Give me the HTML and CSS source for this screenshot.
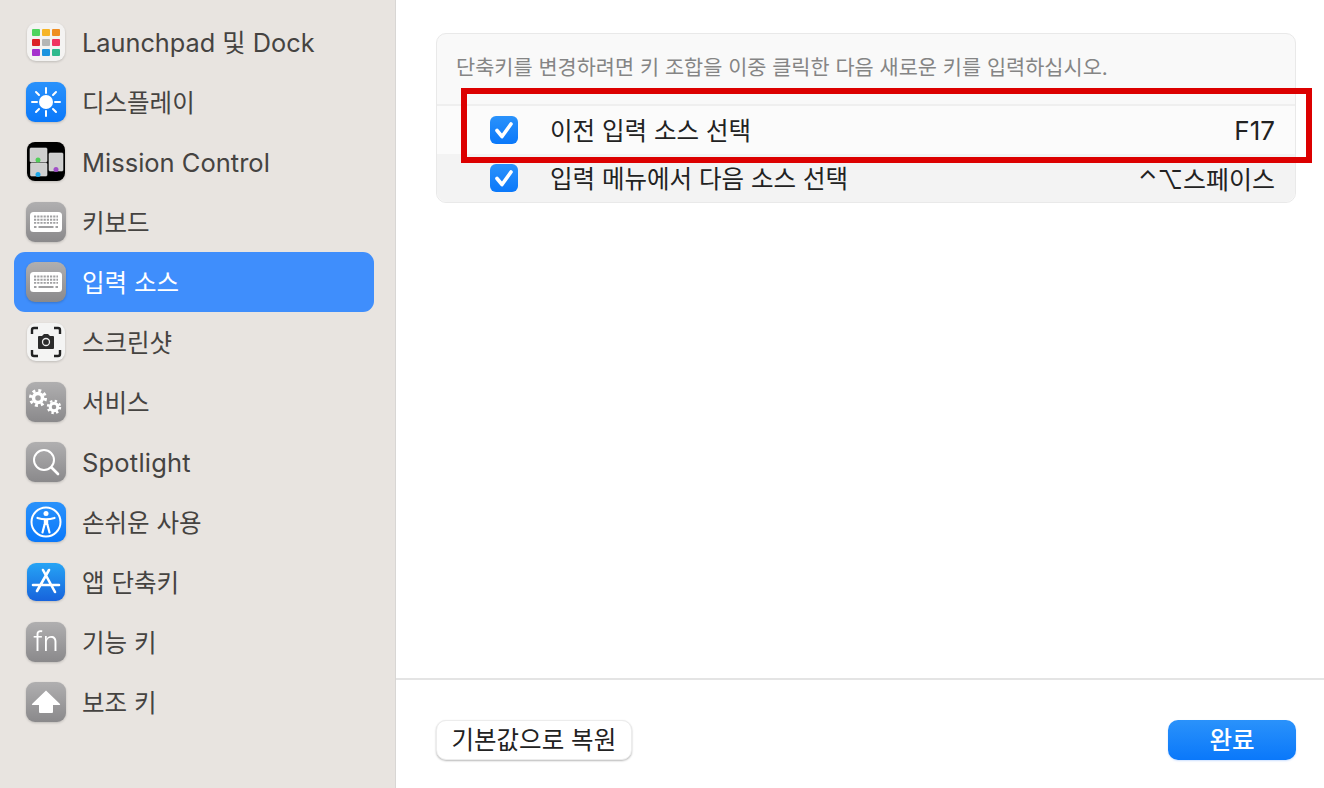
FILE: index.html
```html
<!DOCTYPE html>
<html lang="ko">
<head>
    <meta charset="UTF-8">
    <meta name="viewport" content="width=device-width, initial-scale=1.0">
    <title>키보드 단축키</title>
    <link rel="stylesheet" href="styles.css">
</head>
<body>
    <svg class="sprite" width="0" height="0">
        <defs>
            <linearGradient id="grey" x1="0" y1="0" x2="0" y2="1">
                <stop offset="0" stop-color="#b0afb0"/>
                <stop offset="1" stop-color="#8a898b"/>
            </linearGradient>
            <linearGradient id="blue" x1="0" y1="0" x2="0" y2="1">
                <stop offset="0" stop-color="#2a92fb"/>
                <stop offset="1" stop-color="#0a78fa"/>
            </linearGradient>
            <linearGradient id="store" x1="0" y1="0" x2="0" y2="1">
                <stop offset="0" stop-color="#26a4f5"/>
                <stop offset="1" stop-color="#1763dc"/>
            </linearGradient>
            <symbol id="keyboard" viewBox="0 0 40 40">
                <rect width="40" height="40" rx="9" fill="url(#grey)"/>
                <rect x="4" y="10" width="32" height="20" rx="3.5" fill="#fff"/>
                <path d="M8 14.500h24M8 17.700h24M8 20.900h24" stroke="#a0a0a2" stroke-width="1.900" stroke-dasharray="2.200 1"/>
                <path d="M8 25h2.500M12.500 25h15M29.500 25H32" stroke="#a0a0a2" stroke-width="1.900"/>
            </symbol>
            <symbol id="check" viewBox="0 0 28 28">
                <rect width="28" height="28" rx="6" fill="url(#blue)"/>
                <path d="M7 14.500l5 6L21 8" fill="none" stroke="#fff" stroke-width="3.600" stroke-linecap="round" stroke-linejoin="round"/>
            </symbol>
        </defs>
    </svg>

    <div class="app">
        <nav class="sidebar">
            <div class="nav-item">
                <svg class="icon" viewBox="0 0 40 40">
                    <rect x="1" y="1" width="38" height="38" rx="9" fill="#f4f3f2"/>
                    <rect x="6" y="7" width="8" height="7" rx="1" fill="#4fd45e"/>
                    <rect x="16" y="7" width="8" height="7" rx="1" fill="#f6b427"/>
                    <rect x="26" y="7" width="8" height="7" rx="1" fill="#ee8d22"/>
                    <rect x="6" y="17" width="8" height="7" rx="1" fill="#dc2226"/>
                    <rect x="16" y="17" width="8" height="7" rx="1" fill="#b4b6b6"/>
                    <rect x="26" y="17" width="8" height="7" rx="1" fill="#ef3460"/>
                    <rect x="6" y="27" width="8" height="7" rx="1" fill="#a531cd"/>
                    <rect x="16" y="27" width="8" height="7" rx="1" fill="#1d94df"/>
                    <rect x="26" y="27" width="8" height="7" rx="1" fill="#2fb98d"/>
                </svg>
                <span class="mixed">Launchpad 및 Dock</span>
            </div>
            <div class="nav-item">
                <svg class="icon" viewBox="0 0 40 40">
                    <rect width="40" height="40" rx="9" fill="url(#blue)"/>
                    <circle cx="20" cy="20" r="7" fill="#fff"/>
                    <path d="M20 6v5M20 29v5M6 20h5M29 20h5M10 10l3 3M27 27l3 3M10 30l3-3M27 13l3-3" stroke="#fff" stroke-width="2" stroke-linecap="round"/>
                </svg>
                <span class="ko">디스플레이</span>
            </div>
            <div class="nav-item">
                <svg class="icon" viewBox="0 0 40 40">
                    <rect x="1" width="38" height="39" rx="8" fill="#000"/>
                    <rect x="4" y="6" width="17" height="14" rx="1" fill="#cfcfcf" stroke="#dedede" stroke-width=".6"/>
                    <rect x="4.500" y="21" width="16.500" height="13" rx="1" fill="#cfcfcf" stroke="#dedede" stroke-width=".6"/>
                    <rect x="23" y="11" width="14" height="18" rx="1" fill="#cfcfcf" stroke="#dedede" stroke-width=".6"/>
                    <circle cx="12" cy="18" r="2.500" fill="#52cf5a"/>
                    <circle cx="12" cy="32.500" r="2.500" fill="#1ea7e8"/>
                    <circle cx="30" cy="27.500" r="2.500" fill="#a04fc8"/>
                </svg>
                <span>Mission Control</span>
            </div>
            <div class="nav-item">
                <svg class="icon"><use href="#keyboard"/></svg>
                <span class="ko">키보드</span>
            </div>
            <div class="nav-item selected">
                <svg class="icon"><use href="#keyboard"/></svg>
                <span class="ko">입력 소스</span>
            </div>
            <div class="nav-item">
                <svg class="icon" viewBox="0 0 40 40">
                    <rect x="1" y="1" width="38" height="38" rx="9" fill="#f4f4f3"/>
                    <path d="M6 12V8a2 2 0 0 1 2-2h4M28 6h4a2 2 0 0 1 2 2v4M34 28v4a2 2 0 0 1-2 2h-4M12 34H8a2 2 0 0 1-2-2v-4" fill="none" stroke="#222" stroke-width="2.400"/>
                    <path d="M13 14h3l2-2h4l2 2h3a1 1 0 0 1 1 1v11a1 1 0 0 1-1 1H13a1 1 0 0 1-1-1V15a1 1 0 0 1 1-1z" fill="#2b2b2b"/>
                    <circle cx="20" cy="20" r="3.500" fill="#2b2b2b" stroke="#eee" stroke-width="1.300"/>
                </svg>
                <span class="ko">스크린샷</span>
            </div>
            <div class="nav-item">
                <svg class="icon" viewBox="0 0 40 40">
                    <rect width="40" height="40" rx="9" fill="url(#grey)"/>
                    <circle cx="12" cy="16" r="4.500" fill="none" stroke="#fff" stroke-width="3.500"/>
                    <circle cx="12" cy="16" r="7.500" fill="none" stroke="#fff" stroke-width="3" stroke-dasharray="2.950 2.950"/>
                    <circle cx="28" cy="25" r="3.800" fill="none" stroke="#fff" stroke-width="3"/>
                    <circle cx="28" cy="25" r="6" fill="none" stroke="#fff" stroke-width="2.400" stroke-dasharray="2.360 2.350"/>
                </svg>
                <span class="ko">서비스</span>
            </div>
            <div class="nav-item">
                <svg class="icon" viewBox="0 0 40 40">
                    <rect width="40" height="40" rx="9" fill="url(#grey)"/>
                    <circle cx="18" cy="18" r="10" fill="none" stroke="#fff" stroke-width="2"/>
                    <path d="M25.500 25.500L32 32" stroke="#fff" stroke-width="2.600" stroke-linecap="round"/>
                </svg>
                <span class="spot">Spotlight</span>
            </div>
            <div class="nav-item">
                <svg class="icon" viewBox="0 0 40 40">
                    <rect width="40" height="40" rx="9" fill="url(#blue)"/>
                    <circle cx="20" cy="20" r="14.500" fill="none" stroke="#fff" stroke-width="2"/>
                    <circle cx="20" cy="11.500" r="2.500" fill="#fff"/>
                    <path d="M11.500 16Q20 18.500 28.500 16" fill="none" stroke="#fff" stroke-width="2.200" stroke-linecap="round"/>
                    <path d="M20 17v6" stroke="#fff" stroke-width="4.400"/>
                    <path d="M18.600 22.500L16.500 30.500M21.400 22.500L23.500 30.500" stroke="#fff" stroke-width="2.200" stroke-linecap="round"/>
                </svg>
                <span class="ko">손쉬운 사용</span>
            </div>
            <div class="nav-item">
                <svg class="icon" viewBox="0 0 40 40">
                    <rect x="1" y="1" width="38" height="38" rx="9" fill="url(#store)"/>
                    <path d="M17 8l12 22M23 8L11 29M7 23h26" fill="none" stroke="#fff" stroke-width="2.600" stroke-linecap="round"/>
                </svg>
                <span class="ko">앱 단축키</span>
            </div>
            <div class="nav-item">
                <svg class="icon" viewBox="0 0 40 40">
                    <rect width="40" height="40" rx="9" fill="url(#grey)"/>
                    <text class="fn-text" x="20" y="29" text-anchor="middle">fn</text>
                </svg>
                <span class="ko">기능 키</span>
            </div>
            <div class="nav-item">
                <svg class="icon" viewBox="0 0 40 40">
                    <rect width="40" height="40" rx="9" fill="url(#grey)"/>
                    <path d="M20 8.500L34 22a.6.6 0 0 1-.4 1H27v7a1 1 0 0 1-1 1H14a1 1 0 0 1-1-1v-7H6.400a.6.6 0 0 1-.4-1z" fill="#fff"/>
                </svg>
                <span class="ko">보조 키</span>
            </div>
        </nav>

        <main class="main">
            <div class="content">
                <section class="card">
                    <p class="hint">단축키를 변경하려면 키 조합을 이중 클릭한 다음 새로운 키를 입력하십시오.</p>
                    <div class="row first">
                        <svg class="check"><use href="#check"/></svg>
                        <span class="row-label">이전 입력 소스 선택</span>
                        <span class="row-key latin">F17</span>
                    </div>
                    <div class="row second">
                        <svg class="check"><use href="#check"/></svg>
                        <span class="row-label">입력 메뉴에서 다음 소스 선택</span>
                        <span class="row-key">⌃⌥스페이스</span>
                    </div>
                    <div class="highlight"></div>
                </section>
            </div>
            <footer class="footer">
                <button class="btn">기본값으로 복원</button>
                <button class="btn primary">완료</button>
            </footer>
        </main>
    </div>
</body>
</html>
```

FILE: styles.css
```css
* {
    box-sizing: border-box;
}
html, body {
    margin: 0;
    height: 100%;
    overflow: hidden;
}
body {
    font-family: Inter, "Noto Sans CJK KR", sans-serif;
    background-color: #fff;
}
.sprite {
    position: absolute;
}
.app {
    display: flex;
    height: 788px;
}
.sidebar {
    width: 396px;
    flex-shrink: 0;
    padding: 12px 21px 0 14px;
    background-color: #e8e4e0;
    border-right: 1px solid #d8d6d4;
}
.nav-item {
    display: flex;
    align-items: center;
    gap: 16px;
    height: 60px;
    padding-left: 12px;
    border-radius: 11px;
    font-size: 25.500px;
    color: #454341;
}
.nav-item .ko {
    font-size: 24.500px;
    margin-bottom: 1px;
}
.nav-item .mixed {
    font-size: 25.300px;
    margin-bottom: 2px;
}
.nav-item .spot {
    letter-spacing: 0.2px;
}
.nav-item.selected {
    background-color: #3f8efc;
    color: #fff;
}
.icon {
    width: 40px;
    height: 40px;
    flex-shrink: 0;
    filter: drop-shadow(0 1px 1px rgba(0, 0, 0, 0.18));
}
.fn-text {
    font-family: Inter, sans-serif;
    font-size: 27px;
    font-weight: 300;
    fill: #fff;
}
.main {
    flex: 1;
    display: flex;
    flex-direction: column;
}
.content {
    flex: 1;
    padding: 33px 28px 0 40px;
}
.card {
    position: relative;
    height: 170px;
    background-color: #f9f9f9;
    border: 1px solid #e9e9e9;
    border-radius: 10px;
}
.hint {
    margin: 0;
    height: 72px;
    padding: 20px 19px 0;
    font-size: 20.800px;
    line-height: 28px;
    color: #858585;
    border-bottom: 2px solid #efefef;
}
.row {
    display: flex;
    align-items: center;
    height: 48px;
    padding: 0 20px 0 53px;
    font-size: 24.500px;
    color: #222;
}
.row.first {
    background-color: #fbfbfb;
}
.row.second {
    background-color: #f3f3f3;
    border-radius: 0 0 10px 10px;
}
.check {
    width: 28px;
    height: 28px;
    flex-shrink: 0;
    margin-right: 32px;
}
.row-label {
    flex: 1;
    margin-bottom: 2px;
}
.row-key {
    font-size: 25px;
}
.row-key.latin {
    font-size: 26px;
}
.highlight {
    position: absolute;
    left: 24px;
    top: 54px;
    width: 851px;
    height: 75px;
    border: 6px solid #dc0000;
}
.footer {
    display: flex;
    justify-content: space-between;
    height: 110px;
    padding: 40px 28px 0 40px;
    border-top: 2px solid #e4e4e4;
}
.btn {
    height: 40px;
    padding: 0 14.500px 3px;
    border: 1px solid #ececec;
    border-radius: 10px;
    background-color: #fff;
    box-shadow: 0 1px 2px rgba(0, 0, 0, 0.28);
    font-family: inherit;
    font-size: 24.500px;
    color: #222;
}
.btn.primary {
    width: 128px;
    border: none;
    background: linear-gradient(#2a92fb, #0a78fa);
    box-shadow: 0 1px 2px rgba(0, 100, 255, 0.2);
    font-weight: 500;
    color: #fff;
}
```
